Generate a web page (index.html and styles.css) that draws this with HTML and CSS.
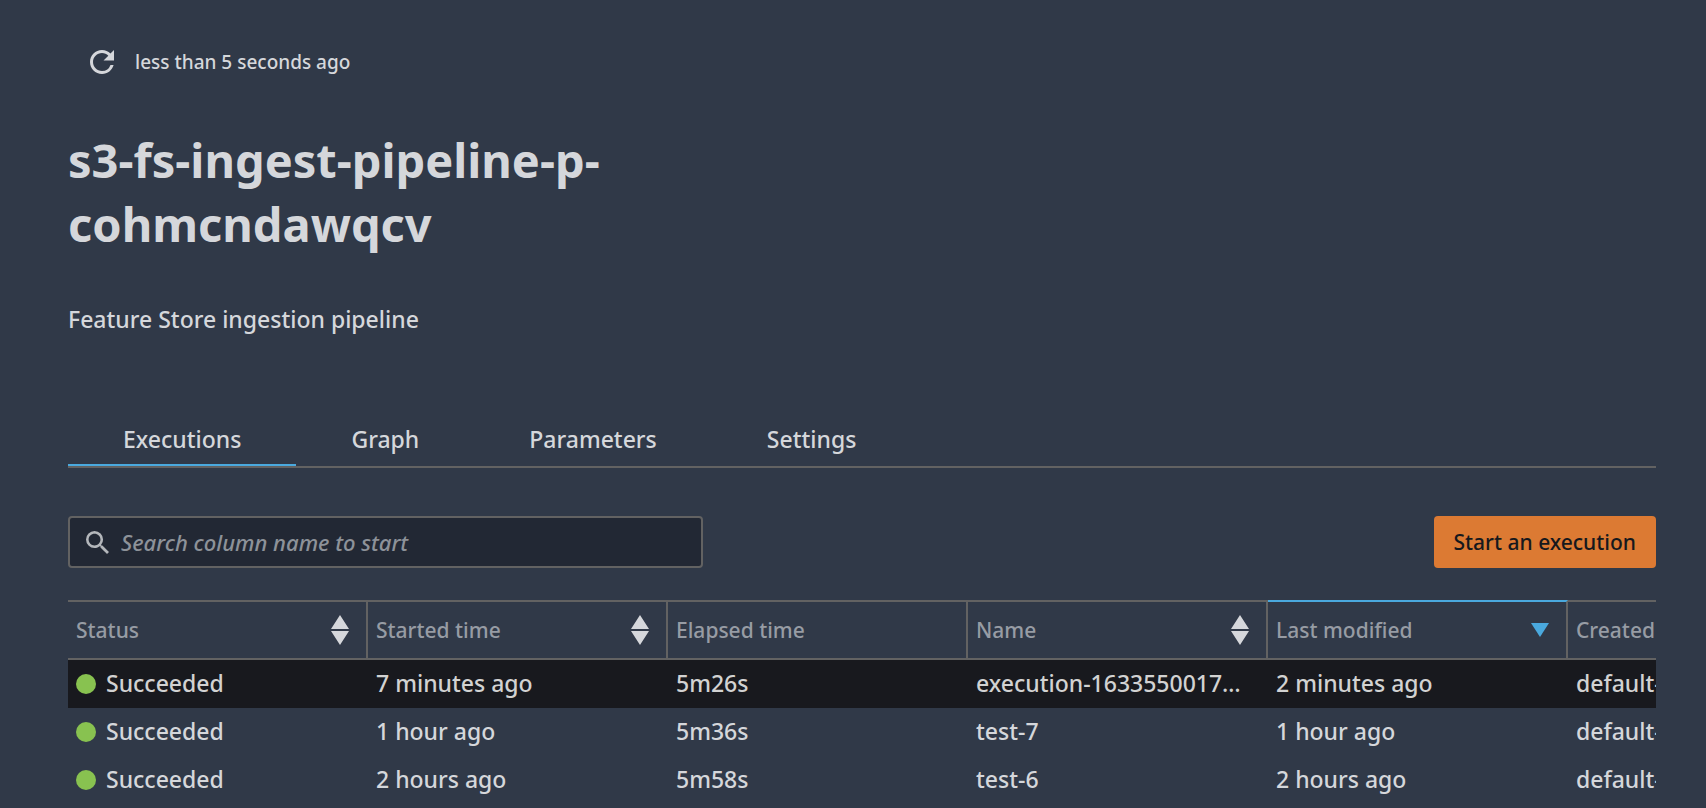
FILE: index.html
```html
<!DOCTYPE html>
<html lang="en">
<head>
<meta charset="utf-8">
<title>s3-fs-ingest-pipeline</title>
<link rel="stylesheet" href="styles.css">
</head>
<body>
<main class="page">
  <div class="refresh">
    <button class="refresh-button" type="button" aria-label="Refresh">
      <svg class="refresh-icon" viewBox="4 4 16 16" aria-hidden="true"><path d="M17.65 6.35A7.96 7.96 0 0 0 12 4c-4.42 0-7.99 3.58-7.99 8s3.57 8 7.99 8c3.73 0 6.84-2.55 7.73-6h-2.08A5.99 5.99 0 0 1 12 18c-3.31 0-6-2.69-6-6s2.69-6 6-6c1.66 0 3.14.69 4.22 1.78L13 11h7V4l-2.35 2.35z"/></svg>
    </button>
    <span class="refresh-text">less than 5 seconds ago</span>
  </div>
  <h1 class="title">s3-fs-ingest-pipeline-p-cohmcndawqcv</h1>
  <p class="description">Feature Store ingestion pipeline</p>

  <nav class="tabs">
    <a class="tab tab-active" href="#executions">Executions</a>
    <a class="tab" href="#graph">Graph</a>
    <a class="tab" href="#parameters">Parameters</a>
    <a class="tab" href="#settings">Settings</a>
  </nav>

  <div class="toolbar">
    <label class="search">
      <svg class="search-icon" viewBox="3 3 17.5 17.5" aria-hidden="true"><path d="M15.5 14h-.79l-.28-.27A6.47 6.47 0 0 0 16 9.5 6.5 6.5 0 1 0 9.5 16c1.61 0 3.09-.59 4.23-1.57l.27.28v.79l5 4.99L20.49 19l-4.99-5zm-6 0C7.01 14 5 11.99 5 9.5S7.01 5 9.5 5 14 7.01 14 9.5 11.99 14 9.5 14z"/></svg>
      <input class="search-input" type="text" aria-label="Search" placeholder="Search column name to start">
    </label>
    <button class="start-button" type="button">Start an execution</button>
  </div>

  <div class="table-wrap">
    <table class="table">
      <thead>
        <tr>
          <th><div class="head">Status<svg class="sort" viewBox="0 0 20 30" aria-hidden="true"><path d="M10 0L19 14H1ZM1 16H19L10 30Z"/></svg></div></th>
          <th><div class="head">Started time<svg class="sort" viewBox="0 0 20 30" aria-hidden="true"><path d="M10 0L19 14H1ZM1 16H19L10 30Z"/></svg></div></th>
          <th><div class="head">Elapsed time</div></th>
          <th><div class="head">Name<svg class="sort" viewBox="0 0 20 30" aria-hidden="true"><path d="M10 0L19 14H1ZM1 16H19L10 30Z"/></svg></div></th>
          <th class="sorted"><div class="head">Last modified<svg class="sort sort-down" viewBox="0 0 20 30" aria-hidden="true"><path d="M1 8H19L10 22Z"/></svg></div></th>
          <th><div class="head">Created</div></th>
        </tr>
      </thead>
      <tbody>
        <tr class="selected">
          <td><span class="dot"></span>Succeeded</td><td>7 minutes ago</td><td>5m26s</td><td>execution-1633550017…</td><td>2 minutes ago</td><td>default-</td>
        </tr>
        <tr>
          <td><span class="dot"></span>Succeeded</td><td>1 hour ago</td><td>5m36s</td><td>test-7</td><td>1 hour ago</td><td>default-</td>
        </tr>
        <tr>
          <td><span class="dot"></span>Succeeded</td><td>2 hours ago</td><td>5m58s</td><td>test-6</td><td>2 hours ago</td><td>default-</td>
        </tr>
      </tbody>
    </table>
  </div>
</main>
</body>
</html>
```
FILE: styles.css
```css
* {
  box-sizing: border-box;
}

body {
  margin: 0;
  background: #303948;
  color: #d5d7db;
  font-family: "Noto Sans", "Open Sans", sans-serif;
  font-size: 23px;
  font-weight: 500;
  line-height: 32px;
}

.page {
  padding: 44px 50px 0 68px;
}

.refresh {
  display: flex;
  align-items: center;
  gap: 21px;
  height: 35px;
  padding-left: 22px;
}

.refresh-button {
  display: flex;
  padding: 0;
  border: 0;
  background: none;
}

.refresh-icon {
  width: 24px;
  height: 24px;
  fill: #d5d7db;
}

.refresh-text {
  font-size: 19px;
}

.title {
  max-width: 636px;
  margin: 49px 0 0;
  font-size: 47px;
  font-weight: 700;
  line-height: 64px;
}

.description {
  margin: 47px 0 0;
}

.tabs {
  display: flex;
  margin-top: 81px;
  border-bottom: 2px solid #626262;
}

.tab {
  padding: 7px 55px 9px;
  border-bottom: 2px solid transparent;
  color: inherit;
  text-decoration: none;
}

.tab-active {
  border-bottom-color: #4aa9de;
}

.toolbar {
  display: flex;
  justify-content: space-between;
  margin-top: 48px;
}

.search {
  display: flex;
  align-items: center;
  gap: 12px;
  width: 40%;
  height: 52px;
  padding: 0 16px;
  border: 2px solid #626262;
  border-radius: 4px;
  background: #222834;
}

.search-icon {
  flex: none;
  width: 23px;
  height: 23px;
  fill: #b4b7bb;
}

.search-input {
  flex: 1;
  min-width: 0;
  padding: 0;
  border: 0;
  outline: 0;
  background: none;
  color: #d5d7db;
  font: inherit;
  font-size: 22px;
}

.search-input::placeholder {
  color: #8d9299;
  font-style: italic;
  opacity: 1;
}

.start-button {
  height: 52px;
  padding: 0 20px;
  border: 0;
  border-radius: 4px;
  background: #dc7a33;
  color: #16181d;
  font: inherit;
  font-size: 21px;
}

.table-wrap {
  margin-top: 32px;
  overflow: hidden;
}

.table {
  width: 1800px;
  table-layout: fixed;
  border-spacing: 0;
}

.table th {
  height: 60px;
  padding: 0 8px;
  border: solid #626262;
  border-width: 2px 2px 2px 0;
  color: #979ca4;
  font-size: 21px;
  font-weight: 500;
  text-align: left;
}

.table .sorted {
  border-top-color: #4aa9de;
}

.head {
  display: flex;
  align-items: center;
  justify-content: space-between;
  padding-right: 8px;
}

.sort {
  width: 20px;
  height: 30px;
  fill: #d5d7db;
}

.sort-down {
  fill: #4aa9de;
}

.table td {
  height: 48px;
  padding: 0 8px 2px;
  white-space: nowrap;
}

.selected {
  background: #18191e;
  color: #d2d2d2;
}

.dot {
  display: inline-block;
  width: 20px;
  height: 20px;
  margin-right: 10px;
  border-radius: 50%;
  background: #88c250;
  vertical-align: -2px;
}
```
